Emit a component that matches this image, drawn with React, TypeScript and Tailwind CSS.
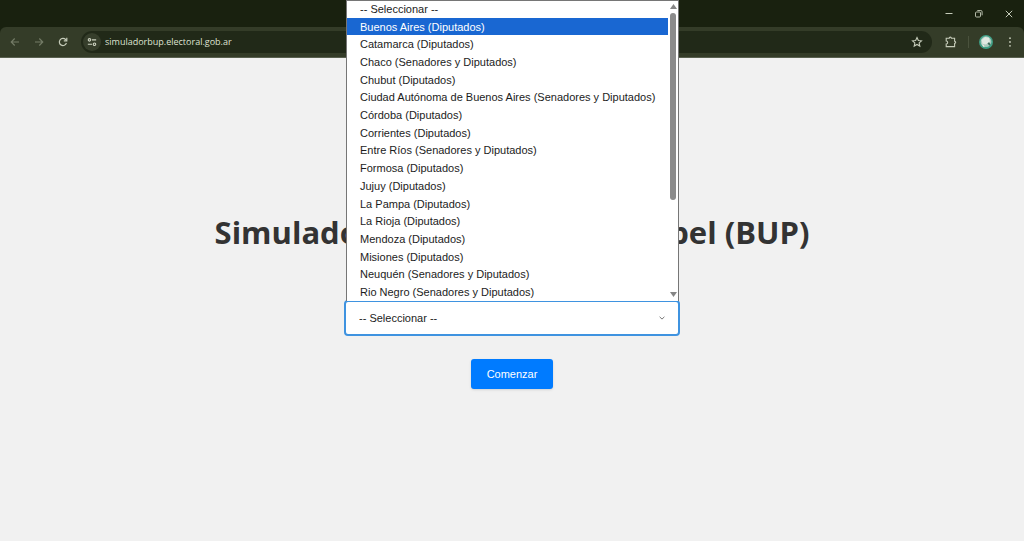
import React from 'react';

const districts = [
    '-- Seleccionar --',
    'Buenos Aires (Diputados)',
    'Catamarca (Diputados)',
    'Chaco (Senadores y Diputados)',
    'Chubut (Diputados)',
    'Ciudad Autónoma de Buenos Aires (Senadores y Diputados)',
    'Córdoba (Diputados)',
    'Corrientes (Diputados)',
    'Entre Ríos (Senadores y Diputados)',
    'Formosa (Diputados)',
    'Jujuy (Diputados)',
    'La Pampa (Diputados)',
    'La Rioja (Diputados)',
    'Mendoza (Diputados)',
    'Misiones (Diputados)',
    'Neuquén (Senadores y Diputados)',
    'Rio Negro (Senadores y Diputados)',
];

const IconButton: React.FC<{ label: string; className?: string; children: React.ReactNode }> = ({ label, className = 'text-[#c5cbb9]', children }) => (
    <button type="button" aria-label={label} className={`flex size-6 shrink-0 items-center justify-center ${className}`}>
        <svg viewBox="0 0 12 12" className="size-3" fill="none" stroke="currentColor" strokeWidth="1.1" aria-hidden="true">
            {children}
        </svg>
    </button>
);

const BrowserBar: React.FC = () => (
    <header className="bg-[#19210f]">
        {/* Window controls */}
        <div className="flex h-[27px] items-center justify-end gap-[6px] pr-[3px]">
            <IconButton label="Minimizar">
                <path d="M2.5 5.5h7" strokeWidth="1" />
            </IconButton>
            <IconButton label="Restaurar">
                <rect x="2.5" y="4" width="5" height="5" rx="1" strokeWidth="0.9" />
                <path d="M4.3 2.5h3.5a1.3 1.3 0 0 1 1.3 1.3v3.5" strokeWidth="0.9" />
            </IconButton>
            <IconButton label="Cerrar">
                <path d="M2.8 2.8l6.4 6.4M9.2 2.8L2.8 9.2" strokeWidth="1" />
            </IconButton>
        </div>

        {/* Toolbar */}
        <div className="flex h-[31px] items-center rounded-t-md border-b border-[#59604f] bg-[#343c28] pl-[3px] pr-[2px]">
            <IconButton label="Atrás" className="text-[#747c67]">
                <path d="M10 6H2.3M5.7 2.5L2.2 6l3.5 3.5" />
            </IconButton>
            <IconButton label="Adelante" className="text-[#747c67]">
                <path d="M2 6h7.7M6.3 2.5L9.8 6 6.3 9.5" />
            </IconButton>
            <IconButton label="Recargar">
                <path d="M9.4 7a3.6 3.6 0 1 1-.8-3.5l1 1" strokeWidth="1.2" />
                <path d="M9.8 1.8v3H6.8" strokeWidth="1.2" />
            </IconButton>

            <div className="ml-[6px] flex h-[22px] flex-1 items-center rounded-full bg-[#212918] pl-[2px] pr-[3px]">
                <button type="button" aria-label="Información del sitio" className="flex size-[18px] shrink-0 items-center justify-center rounded-full bg-[#363e2b] text-[#d0d5c4]">
                    <svg viewBox="0 0 12 12" className="size-[10px]" fill="none" stroke="currentColor" strokeWidth="1.3" aria-hidden="true">
                        <circle cx="3" cy="3.4" r="1.5" />
                        <path d="M6 3.4h5M1 8.6h5" />
                        <circle cx="9" cy="8.6" r="1.5" />
                    </svg>
                </button>
                <input
                    type="text"
                    aria-label="Dirección"
                    defaultValue="simuladorbup.electoral.gob.ar"
                    className="ml-1 min-w-0 flex-1 bg-transparent font-['Open_Sans','Noto_Sans',sans-serif] text-[9px] leading-4 text-[#dfe3d2] outline-none"
                />
                <IconButton label="Marcar como favorito">
                    <path d="M6 1.5l1.35 2.95 3.15.35-2.35 2.1.65 3.15L6 8.45l-2.8 1.6.65-3.15L1.5 4.8l3.15-.35z" />
                </IconButton>
            </div>

            <div className="ml-[7px] flex items-center">
                <IconButton label="Extensiones">
                    <path d="M1.2 2.2H4.2a1.1 1.1 0 0 1 2.2 0H9.6V5.2a1.1 1.1 0 0 1 0 2.2V10.6H1.2V8a1.5 1.5 0 0 0 0-3z" />
                </IconButton>
                <span className="mx-[5px] h-3 w-px bg-[#4a523d]" />
                <button type="button" aria-label="Perfil" className="flex size-6 items-center justify-center">
                    <svg viewBox="0 0 14 14" className="size-[14px]" aria-hidden="true">
                        <circle cx="7" cy="7" r="7" fill="#3f9f86" />
                        <circle cx="7" cy="6.7" r="5.4" fill="#a9c9bd" />
                        <path d="M2.5 5l3.5-3 4 .8 1 3.7-4 3-3.5-.5z" fill="#e0e8e2" />
                        <path d="M8.5 8.5l1.4-1.2 1.8 2-1.2 1.5z" fill="#3e685a" />
                        <path d="M3 9l2 1.2.6 2L4 11.4z" fill="#f1e7e2" />
                    </svg>
                </button>
                <IconButton label="Menú">
                    <g fill="currentColor" stroke="none">
                        <circle cx="6" cy="2.2" r="0.9" />
                        <circle cx="6" cy="6" r="0.9" />
                        <circle cx="6" cy="9.8" r="0.9" />
                    </g>
                </IconButton>
            </div>
        </div>
    </header>
);

const DistrictList: React.FC = () => (
    <div className="absolute bottom-full left-px right-0 z-10 flex h-[301px] border-x border-[#767676] bg-white shadow-[inset_0_1px_#767676]">
        <ul role="listbox" aria-label="Distritos" className="grid flex-1 auto-rows-fr">
            {districts.map((name, i) => (
                <li
                    key={name}
                    role="option"
                    aria-selected={i === 1}
                    className={`flex items-center whitespace-nowrap pl-[13px] text-[11px] leading-4 ${i === 1 ? 'bg-[#1967d2] text-white' : 'text-[#1c1c1c]'}`}
                >
                    {name}
                </li>
            ))}
        </ul>
        {/* Scrollbar */}
        <div className="flex w-[10px] flex-col items-center justify-between py-1">
            <svg viewBox="0 0 7 5" className="h-[5px] w-[7px]" fill="#858585" aria-hidden="true">
                <path d="M3.5 0L7 5H0z" />
            </svg>
            <div className="my-1 w-[6px] flex-1">
                <div className="h-[68%] rounded-full bg-[#8b8b8b]" />
            </div>
            <svg viewBox="0 0 7 5" className="h-[5px] w-[7px]" fill="#858585" aria-hidden="true">
                <path d="M0 0h7L3.5 5z" />
            </svg>
        </div>
    </div>
);

export default function App() {
    return (
        <div className="flex min-h-screen flex-col bg-[#f1f1f1] font-['Liberation_Sans',Arial,sans-serif]">
            <BrowserBar />
            <main className="flex flex-1 flex-col items-center justify-center">
                <h1 className="text-center font-['Open_Sans','Noto_Sans',sans-serif] text-[31px] font-bold leading-[44px] text-[#333]">
                    Simulador Boleta Única de Papel (BUP)
                </h1>
                <div className="relative mt-[47px] w-[334px] max-w-full">
                    <DistrictList />
                    <select
                        aria-label="Distrito"
                        defaultValue={districts[0]}
                        className="block h-[34px] w-full appearance-none rounded-[3px] bg-white px-[14px] text-[11px] leading-4 text-[#1c1c1c] outline-2 -outline-offset-1 outline-[#3f93e0]"
                    >
                        {districts.map((name) => (
                            <option key={name}>{name}</option>
                        ))}
                    </select>
                    <svg viewBox="0 0 6 4" className="pointer-events-none absolute right-[14px] top-[15px] h-1 w-[6px]" fill="none" stroke="#777" aria-hidden="true">
                        <path d="M0.6 0.8L3 3.1 5.4 0.8" />
                    </svg>
                </div>
                <button type="button" className="mt-6 h-[30px] rounded-[3px] bg-[#007bff] px-4 text-[11px] leading-4 text-white shadow-sm">
                    Comenzar
                </button>
            </main>
        </div>
    );
}
